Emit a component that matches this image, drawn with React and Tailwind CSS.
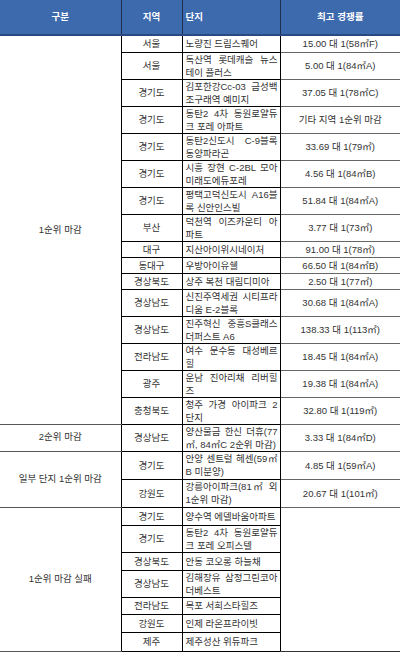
const groups = [
  {
    label: "1순위 마감",
    rows: [
      ["서울", ["노량진 드림스퀘어"], "15.00 대 1(58㎡F)", "h-[17px]"],
      ["서울", ["독산역 롯데캐슬 뉴스", "테이 플러스"], "5.00 대 1(84㎡A)", "h-[26px]"],
      ["경기도", ["김포한강Cc-03 금성백", "조구래역 예미지"], "37.05 대 1(78㎡C)", "h-[26px]"],
      ["경기도", ["동탄2 4차 동원로얄듀", "크 포레 아파트"], "기타 지역 1순위 마감", "h-[26px]"],
      ["경기도", ["동탄2신도시 C-9블록", "동양파라곤"], "33.69 대 1(79㎡)", "h-[26px]"],
      ["경기도", ["시흥 장현 C-2BL 모아", "미래도에듀포레"], "4.56 대 1(84㎡B)", "h-[26px]"],
      ["경기도", ["평택고덕신도시 A16블", "록 신안인스빌"], "51.84 대 1(84㎡A)", "h-[26px]"],
      ["부산", ["덕천역 이즈카운티 아", "파트"], "3.77 대 1(73㎡)", "h-[26px]"],
      ["대구", ["지산아이위시네이처"], "91.00 대 1(78㎡)", "h-[16px]"],
      ["동대구", ["우방아이유쉘"], "66.50 대 1(84㎡B)", "h-[16px]"],
      ["경상북도", ["상주 복천 대림디미아"], "2.50 대 1(77㎡)", "h-[16px]"],
      ["경상남도", ["신진주역세권 시티프라", "디움 E-2블록"], "30.68 대 1(84㎡A)", "h-[26px]"],
      ["경상남도", ["진주혁신 중흥S클래스", "더퍼스트 A6"], "138.33 대 1(113㎡)", "h-[26px]"],
      ["전라남도", ["여수 문수동 대성베르", "힐"], "18.45 대 1(84㎡A)", "h-[26px]"],
      ["광주", ["운남 진아리채 리버힐", "즈"], "19.38 대 1(84㎡A)", "h-[26px]"],
      ["충청북도", ["청주 가경 아이파크 2", "단지"], "32.80 대 1(119㎡)", "h-[26px]"],
    ],
  },
  {
    label: "2순위 마감",
    rows: [
      ["경상남도", ["양산물금 한신 더휴(77", "㎡, 84㎡C 2순위 마감)"], "3.33 대 1(84㎡D)", "h-[27px]"],
    ],
  },
  {
    label: "일부 단지 1순위 마감",
    rows: [
      ["경기도", ["안양 센트럴 헤센(59㎡", "B 미분양)"], "4.85 대 1(59㎡A)", "h-[28px]"],
      ["강원도", ["강릉아이파크(81㎡ 외", "1순위 마감)"], "20.67 대 1(101㎡)", "h-[28px]"],
    ],
  },
  {
    label: "1순위 마감 실패",
    merged: true,
    rows: [
      ["경기도", ["양수역 에델바움아파트"], null, "h-[18px]"],
      ["경기도", ["동탄2 4차 동원로얄듀", "크 포레 오피스텔"], null, "h-[26px]"],
      ["경상북도", ["안동 코오롱 하늘채"], null, "h-[18px]"],
      ["경상남도", ["김해장유 삼정그린코아", "더베스트"], null, "h-[26px]"],
      ["전라남도", ["목포 서희스타힐즈"], null, "h-[17px]"],
      ["강원도", ["인제 라온프라이빗"], null, "h-[18px]"],
      ["제주", ["제주성산 위듀파크"], null, "h-[19px]"],
    ],
  },
];

function Complex({ lines }) {
  return (
    <div className="leading-[13px]">
      {lines.map((line, i) =>
        i < lines.length - 1 ? (
          <div key={i} className="whitespace-nowrap text-justify [text-align-last:justify]">
            {line}
          </div>
        ) : (
          <div key={i} className="whitespace-nowrap text-left">
            {line}
          </div>
        )
      )}
    </div>
  );
}

export default function App() {
  return (
    <div className="w-[400px] h-[652px] bg-white overflow-hidden">
      <table className="w-[400px] table-fixed border-collapse text-[9.5px] text-[#333] font-['Liberation_Sans','Noto_Sans_CJK_KR',sans-serif]">
        <colgroup>
          <col className="w-[121px]" />
          <col className="w-[61px]" />
          <col className="w-[98px]" />
          <col className="w-[120px]" />
        </colgroup>
        <thead>
          <tr className="h-[35px] bg-[#3d69ad] text-white font-bold">
            <th className="border-b-2 border-r border-b-[#284a80] border-r-[#1e2f4d] text-center font-bold">구분</th>
            <th className="border-b-2 border-r border-b-[#284a80] border-r-[#1e2f4d] text-center font-bold">지역</th>
            <th className="border-b-2 border-r border-b-[#284a80] border-r-[#1e2f4d] text-left pl-[3px] font-bold">단지</th>
            <th className="border-b-2 border-b-[#284a80] text-center font-bold">최고 경쟁률</th>
          </tr>
        </thead>
        <tbody>
          {groups.map((g) =>
            g.rows.map((r, i) => (
              <tr key={g.label + i} className={r[3]}>
                {i === 0 && (
                  <td
                    rowSpan={g.rows.length}
                    className="border-b border-r border-b-[#555] border-r-black text-center align-middle"
                  >
                    {g.label}
                  </td>
                )}
                <td className="border border-black text-center align-middle leading-[13px]">{r[0]}</td>
                <td className="border border-black pl-[3px] pr-[2px] align-middle">
                  <Complex lines={r[1]} />
                </td>
                {g.merged ? (
                  i === 0 && (
                    <td rowSpan={g.rows.length} className="border-b border-b-[#333]"></td>
                  )
                ) : (
                  <td className="border-b border-b-[#666] text-center align-middle leading-[13px]">{r[2]}</td>
                )}
              </tr>
            ))
          )}
        </tbody>
      </table>
    </div>
  );
}
